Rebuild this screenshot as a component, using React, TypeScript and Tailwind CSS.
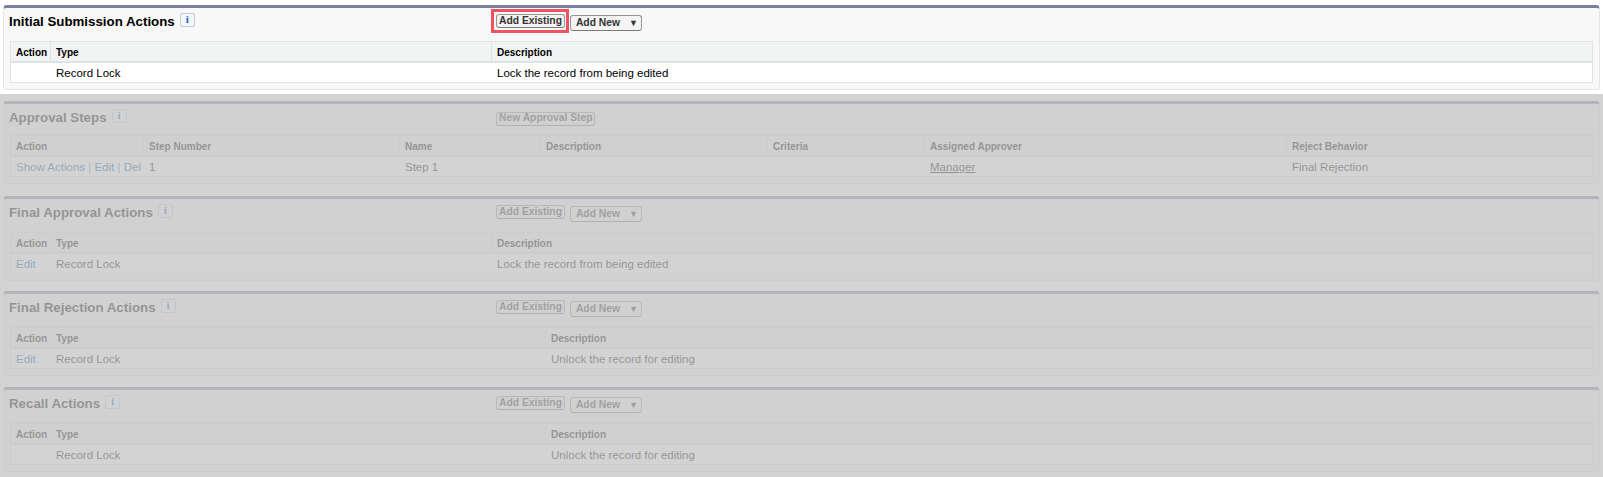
import React from 'react';

const FONT = "[font-family:'Liberation_Sans',Arial,sans-serif]";

const InfoIcon = () => (
    <span className="mt-[-4px] ml-[5px] flex h-[14px] w-[15px] items-center justify-center rounded-[2px] border border-[#c4ccd4] bg-[#f4f7fa] font-['Liberation_Serif',serif] text-[11px] font-bold leading-none text-[#1468c8]">
        i
    </span>
);

const Btn = ({ label, arrow, boxed }: { label: string; arrow?: boolean; boxed?: boolean }) => (
    <span
        className={`relative flex items-center whitespace-nowrap rounded-[3px] border border-[#969696] border-b-[#7a7a7a] bg-[#f4f4f4] text-[10.3px] font-bold leading-none text-[#333] ${
            arrow ? 'mt-[1px] h-[16px] w-[72px] pl-[5px]' : 'h-[14px] px-[2px]'
        }`}
    >
        {label}
        {arrow && <span className="ml-[9px] text-[9px] text-[#333]">▼</span>}
        {boxed && <span className="absolute -top-[6px] -right-[5px] -bottom-[6px] -left-[6px] border-[3px] border-[#ef5360]" />}
    </span>
);

type Col = { w: string; head: string };

const Table = ({ cols, cells, top }: { cols: Col[]; cells: React.ReactNode[]; top: string }) => (
    <div className={`mx-[6px] border border-[#e0e3e5] ${top}`}>
        <div className="flex h-[21px] items-center border-b-2 border-[#e0e3e5] bg-[#f2f3f3] text-[10px] font-bold text-[#000]">
            {cols.map((c, i) => (
                <div key={c.head} className={`flex h-full shrink-0 items-center px-[5px] pt-[1px] ${c.w} ${i < cols.length - 1 ? 'border-r border-[#e0e3e5]' : ''}`}>
                    {c.head}
                </div>
            ))}
        </div>
        <div className="flex h-[19px] items-center bg-white pt-[2px] text-[11.5px] text-[#000]">
            {cols.map((c, i) => (
                <div key={c.head} className={`shrink-0 px-[5px] ${c.w}`}>
                    {cells[i]}
                </div>
            ))}
        </div>
    </div>
);

const Panel = ({
    title,
    buttons,
    cols,
    cells,
    top = 'mt-[14px]',
    className = '',
}: {
    title: string;
    buttons: React.ReactNode;
    cols: Col[];
    cells: React.ReactNode[];
    top?: string;
    className?: string;
}) => (
    <section className={`mx-[3px] rounded-[4px] border border-t-[3px] border-[#e6e6e6] border-t-[#7b7f9e] bg-[#f8f8f8] pb-[6px] ${className}`}>
        <div className="flex h-[19px] items-center pt-[6px]">
            <div className="flex w-[492px] shrink-0 items-center pt-[2px] pl-[5px]">
                <h2 className="text-[13.3px] font-bold leading-none text-[#000]">{title}</h2>
                <InfoIcon />
            </div>
            <div className="mt-[4px] flex items-start gap-[5px]">{buttons}</div>
        </div>
        <Table cols={cols} cells={cells} top={top} />
    </section>
);

const addButtons = (boxed?: boolean) => (
    <>
        <Btn label="Add Existing" boxed={boxed} />
        <Btn label="Add New" arrow />
    </>
);

const Link = ({ children }: { children: React.ReactNode }) => <span className="text-[#015ba7]">{children}</span>;

const wideCols: Col[] = [
    { w: 'w-[40px]', head: 'Action' },
    { w: 'w-[441px]', head: 'Type' },
    { w: 'flex-1', head: 'Description' },
];

const narrowCols: Col[] = [
    { w: 'w-[40px]', head: 'Action' },
    { w: 'w-[495px]', head: 'Type' },
    { w: 'flex-1', head: 'Description' },
];

const stepCols: Col[] = [
    { w: 'w-[133px]', head: 'Action' },
    { w: 'w-[256px]', head: 'Step Number' },
    { w: 'w-[141px]', head: 'Name' },
    { w: 'w-[227px]', head: 'Description' },
    { w: 'w-[157px]', head: 'Criteria' },
    { w: 'w-[362px]', head: 'Assigned Approver' },
    { w: 'flex-1', head: 'Reject Behavior' },
];

export default function App() {
    return (
        <div className={`h-[477px] overflow-hidden bg-white ${FONT}`}>
            <div className="h-[94px] pt-[5px]">
                <Panel title="Initial Submission Actions" buttons={addButtons(true)} cols={wideCols} cells={['', 'Record Lock', 'Lock the record from being edited']} />
            </div>
            <div className="relative h-[383px] pt-[7px]">
                <Panel
                    title="Approval Steps"
                    buttons={<Btn label="New Approval Step" />}
                    cols={stepCols}
                    top="mt-[12px]"
                    className="mb-[12px]"
                    cells={[
                        <span className="whitespace-nowrap">
                            <Link>Show Actions</Link> <span className="text-[#777]">|</span> <Link>Edit</Link> <span className="text-[#777]">|</span> <Link>Del</Link>
                        </span>,
                        '1',
                        'Step 1',
                        '',
                        '',
                        <span className="underline">Manager</span>,
                        'Final Rejection',
                    ]}
                />
                <Panel title="Final Approval Actions" buttons={addButtons()} cols={wideCols} className="mb-[10px]" cells={[<Link>Edit</Link>, 'Record Lock', 'Lock the record from being edited']} />
                <Panel title="Final Rejection Actions" buttons={addButtons()} cols={narrowCols} className="mb-[11px]" cells={[<Link>Edit</Link>, 'Record Lock', 'Unlock the record for editing']} />
                <Panel title="Recall Actions" buttons={addButtons()} cols={narrowCols} cells={['', 'Record Lock', 'Unlock the record for editing']} />
                <div className="absolute inset-0 bg-[#c4c4c4]/75" />
            </div>
        </div>
    );
}
